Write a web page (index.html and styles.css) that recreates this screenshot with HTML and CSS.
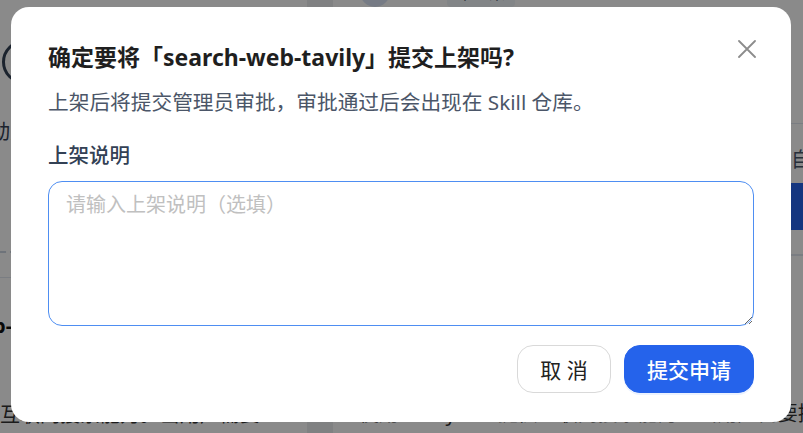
FILE: index.html
```html
<!DOCTYPE html>
<html lang="zh-CN">
<head>
<meta charset="utf-8">
<title>提交上架</title>
<link rel="stylesheet" href="styles.css">
</head>
<body>
<div class="page">
  <div class="col col-left">
    <div class="side-avatar"></div>
    <div class="side-text">动力</div>
    <div class="dash-line"></div>
    <div class="solid-line"></div>
    <div class="card-name">tavily-search-web-o-</div>
    <div class="card-desc">互联网搜索能力。当用户需要</div>
  </div>
  <div class="col col-right">
    <div class="card-head">
      <div class="avatar"></div>
      <span class="tag">未上架</span>
    </div>
    <div class="solid-line top-line"></div>
    <div class="right-text">来源自</div>
    <div class="blue-btn"></div>
    <div class="solid-line mid-line"></div>
    <div class="solid-line"></div>
    <div class="card-desc right-desc">使用 Tavily API 提供互联网搜索能力。当用户需要搜索</div>
  </div>
</div>

<div class="overlay">
  <div class="modal" role="dialog" aria-modal="true">
    <div class="modal-head">
      <h2 class="modal-title">确定要将「search-web-tavily」提交上架吗?</h2>
      <button class="close-btn" aria-label="关闭">
        <svg width="18" height="18" viewBox="0 0 18 18" fill="none" stroke="#8c8c8c" stroke-width="1.8" stroke-linecap="round">
          <path d="M1 1L17 17M17 1L1 17"/>
        </svg>
      </button>
    </div>
    <p class="modal-sub">上架后将提交管理员审批，审批通过后会出现在 Skill 仓库。</p>
    <label class="field-label" for="note">上架说明</label>
    <textarea id="note" class="note" placeholder="请输入上架说明（选填）"></textarea>
    <div class="actions">
      <button class="btn btn-cancel">取 消</button>
      <button class="btn btn-primary">提交申请</button>
    </div>
  </div>
</div>
</body>
</html>
```

FILE: styles.css
```css
* { box-sizing: border-box; }

html, body {
  margin: 0;
  padding: 0;
  width: 803px;
  height: 433px;
  overflow: hidden;
  font-family: "Noto Sans", "Noto Sans CJK SC", sans-serif;
}

/* ---------- background page ---------- */
.page {
  display: flex;
  gap: 26px;
  width: 920px;
  height: 433px;
  margin-left: -20px;
  background: #eceef1;
}

.col {
  flex: none;
  background: #fff;
  display: flex;
  flex-direction: column;
}

.col-left {
  width: 327px;
  padding-top: 40px;
}

.side-avatar {
  width: 44px;
  height: 44px;
  margin-left: 22px;
  border: 3px solid #334155;
  border-radius: 50%;
}

.side-text {
  margin-top: 32px;
  margin-left: 10px;
  font-size: 20px;
  color: #334155;
}

.dash-line {
  margin-top: 106px;
  border-top: 2px dashed #cbd5e1;
}

.solid-line {
  border-top: 1px solid #e2e8f0;
}

.col-left .solid-line { margin-top: 24px; }

.card-name {
  margin-top: 34px;
  margin-left: -150px;
  font-size: 20px;
  font-weight: 700;
  color: #111;
  white-space: nowrap;
}

.card-desc {
  font-size: 20px;
  color: #333;
  white-space: nowrap;
}

.col-left .card-desc { margin-left: 20px; margin-top: 60px; }

.col-right {
  width: 560px;
}

.card-head {
  display: flex;
  align-items: flex-end;
  gap: 57px;
  height: 7px;
  padding-left: 27px;
}

.avatar {
  flex: none;
  width: 30px;
  height: 30px;
  border-radius: 50%;
  background: #dbe4f5;
}

.tag {
  flex: none;
  padding: 0 10px;
  height: 26px;
  line-height: 24px;
  background: #f1f5f9;
  color: #334155;
  font-size: 16px;
  border-radius: 4px;
}

.top-line { margin-top: 116px; }

.right-text {
  margin-top: 20px;
  padding-left: 418px;
  font-size: 20px;
  color: #475569;
  white-space: nowrap;
}

.blue-btn {
  margin-top: 10px;
  margin-left: 458px;
  width: 100px;
  height: 47px;
  background: #2563eb;
}

.mid-line { margin-top: 24px; }
.col-right .solid-line:last-of-type { margin-top: 25px; }

.right-desc { margin-top: 142px; margin-left: 26px; }

/* ---------- modal ---------- */
.overlay {
  position: fixed;
  inset: 0;
  background: rgba(0, 0, 0, 0.46);
  display: flex;
  justify-content: flex-start;
  align-items: flex-start;
  padding: 7px 0 0 11px;
}

.modal {
  width: 780px;
  height: 415px;
  background: #fff;
  border-radius: 18px;
  padding: 34px 37px 29px 37px;
  display: flex;
  flex-direction: column;
}

.modal-head {
  display: flex;
  justify-content: space-between;
  align-items: flex-start;
}

.modal-title {
  margin: 0;
  font-size: 23px;
  line-height: 32px;
  font-weight: 700;
  color: #1f1f1f;
  white-space: nowrap;
}

.close-btn {
  flex: none;
  border: 0;
  background: none;
  padding: 0;
  margin: -1px -2px 0 0;
  width: 18px;
  height: 18px;
  cursor: pointer;
}

.close-btn svg { display: block; }

.modal-sub {
  margin: 14px 0 0;
  font-size: 20.7px;
  line-height: 30px;
  color: #4b5668;
  white-space: nowrap;
}

.field-label {
  margin-top: 23px;
  font-size: 20.5px;
  line-height: 30px;
  font-weight: 500;
  color: #334155;
}

.note {
  margin-top: 11px;
  width: 100%;
  height: 145px;
  border: 1px solid #4e8ef2;
  border-radius: 14px;
  padding: 8px 17px;
  font-family: inherit;
  font-size: 20px;
  line-height: 30px;
  color: #1f1f1f;
  outline: none;
  resize: vertical;
}

.note::placeholder { color: #c0c0c0; }

.actions {
  margin-top: 19px;
  display: flex;
  justify-content: flex-end;
  gap: 13px;
}

.btn {
  height: 48px;
  border-radius: 16px;
  font-family: inherit;
  font-size: 21px;
  padding: 0;
  cursor: pointer;
}

.btn-cancel {
  width: 94px;
  background: #fff;
  border: 1px solid #d9d9d9;
  color: #222;
}

.btn-primary {
  width: 130px;
  background: #2563eb;
  border: 1px solid #2563eb;
  color: #fff;
  font-weight: 500;
  box-shadow: 0 2px 0 rgba(5, 95, 255, 0.08);
}
```
